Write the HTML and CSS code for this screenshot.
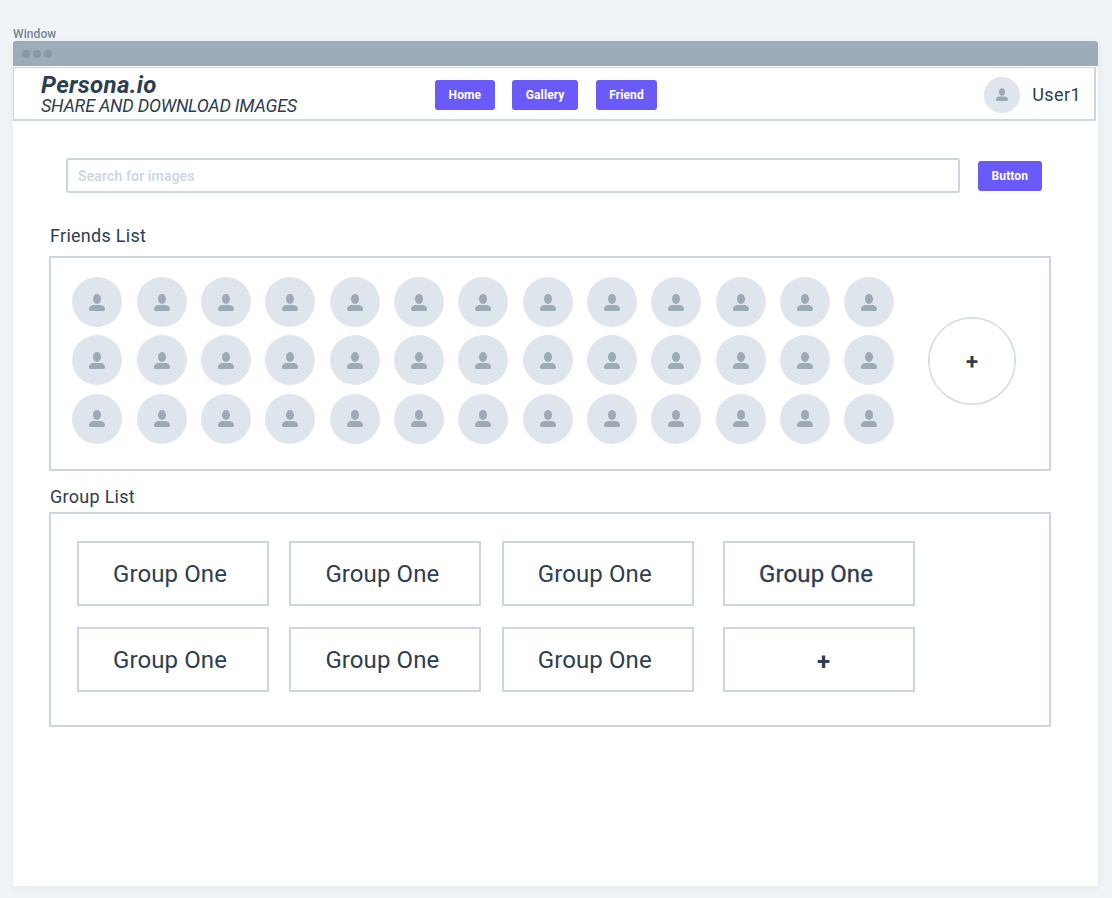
FILE: index.html
```html
<!DOCTYPE html>
<html lang="en">
	<head>
		<meta charset="utf-8" />
		<meta name="viewport" content="width=device-width, initial-scale=1" />
		<title>Persona.io</title>
		<link rel="stylesheet" href="styles.css">
	</head>
	<body>
		<svg class="sprites" width="0" height="0">
			<symbol id="person" viewBox="0 0 16 17">
				<ellipse cx="8" cy="5" rx="4" ry="5" />
				<path d="M0 15.2C0 12.6 2.6 11 4.5 11h7c1.900 0 4.500 1.600 4.500 4.200 0 1.200-.8 1.800-1.800 1.800H1.800C.8 17 0 16.400 0 15.200z" />
			</symbol>
		</svg>

		<div class="window-label">Window</div>
		<div class="window">
			<div class="titlebar">
				<span class="dot"></span><span class="dot"></span><span class="dot"></span>
			</div>

			<header class="topbar">
				<div class="brand">
					<h1>Persona.io</h1>
					<p>SHARE AND DOWNLOAD IMAGES</p>
				</div>
				<nav class="nav">
					<a class="btn" href="#">Home</a>
					<a class="btn" href="#">Gallery</a>
					<a class="btn" href="#">Friend</a>
				</nav>
				<div class="user">
					<span class="avatar small"><svg><use href="#person" /></svg></span>
					<span>User1</span>
				</div>
			</header>

			<div class="search">
				<input type="text" placeholder="Search for images" />
				<a class="btn" href="#">Button</a>
			</div>

			<h2>Friends List</h2>
			<section class="box friends">
				<div class="friend-grid">
					<span class="avatar"><svg><use href="#person" /></svg></span>
					<span class="avatar"><svg><use href="#person" /></svg></span>
					<span class="avatar"><svg><use href="#person" /></svg></span>
					<span class="avatar"><svg><use href="#person" /></svg></span>
					<span class="avatar"><svg><use href="#person" /></svg></span>
					<span class="avatar"><svg><use href="#person" /></svg></span>
					<span class="avatar"><svg><use href="#person" /></svg></span>
					<span class="avatar"><svg><use href="#person" /></svg></span>
					<span class="avatar"><svg><use href="#person" /></svg></span>
					<span class="avatar"><svg><use href="#person" /></svg></span>
					<span class="avatar"><svg><use href="#person" /></svg></span>
					<span class="avatar"><svg><use href="#person" /></svg></span>
					<span class="avatar"><svg><use href="#person" /></svg></span>

					<span class="avatar"><svg><use href="#person" /></svg></span>
					<span class="avatar"><svg><use href="#person" /></svg></span>
					<span class="avatar"><svg><use href="#person" /></svg></span>
					<span class="avatar"><svg><use href="#person" /></svg></span>
					<span class="avatar"><svg><use href="#person" /></svg></span>
					<span class="avatar"><svg><use href="#person" /></svg></span>
					<span class="avatar"><svg><use href="#person" /></svg></span>
					<span class="avatar"><svg><use href="#person" /></svg></span>
					<span class="avatar"><svg><use href="#person" /></svg></span>
					<span class="avatar"><svg><use href="#person" /></svg></span>
					<span class="avatar"><svg><use href="#person" /></svg></span>
					<span class="avatar"><svg><use href="#person" /></svg></span>
					<span class="avatar"><svg><use href="#person" /></svg></span>

					<span class="avatar"><svg><use href="#person" /></svg></span>
					<span class="avatar"><svg><use href="#person" /></svg></span>
					<span class="avatar"><svg><use href="#person" /></svg></span>
					<span class="avatar"><svg><use href="#person" /></svg></span>
					<span class="avatar"><svg><use href="#person" /></svg></span>
					<span class="avatar"><svg><use href="#person" /></svg></span>
					<span class="avatar"><svg><use href="#person" /></svg></span>
					<span class="avatar"><svg><use href="#person" /></svg></span>
					<span class="avatar"><svg><use href="#person" /></svg></span>
					<span class="avatar"><svg><use href="#person" /></svg></span>
					<span class="avatar"><svg><use href="#person" /></svg></span>
					<span class="avatar"><svg><use href="#person" /></svg></span>
					<span class="avatar"><svg><use href="#person" /></svg></span>
				</div>
				<a class="add-friend plus" href="#">+</a>
			</section>

			<h2 class="group-title">Group List</h2>
			<section class="box groups">
				<div class="group">Group One</div>
				<div class="group">Group One</div>
				<div class="group">Group One</div>
				<div class="group last strong">Group One</div>
				<div class="group">Group One</div>
				<div class="group">Group One</div>
				<div class="group">Group One</div>
				<a class="group last add-group plus" href="#">+</a>
			</section>
		</div>
	</body>
</html>
```

FILE: styles.css
```css
:root {
	--page: #f0f4f7;
	--line: #cbd6e2;
	--bar: #9cacb9;
	--dot: #8798a6;
	--ink: #2d3e50;
	--soft: #dfe5ed;
	--icon: #9aabb8;
	--accent: #6a5bf8;
}

* {
	box-sizing: border-box;
	margin: 0;
	padding: 0;
}

body {
	background: var(--page);
	color: var(--ink);
	font-family: Roboto, "Liberation Sans", sans-serif;
	padding: 28px 14px 12px 13px;
	min-height: 898px;
}

a {
	text-decoration: none;
	color: inherit;
}

.sprites {
	position: absolute;
}

.window-label {
	font-size: 12px;
	font-weight: 500;
	line-height: 13px;
	letter-spacing: 0.1px;
	color: #74879a;
}

.window {
	background: #fff;
	height: 845px;
	border-radius: 3px 3px 0 0;
	box-shadow: 0 2px 8px rgba(45, 62, 80, 0.06);
}

.titlebar {
	height: 25px;
	background: var(--bar);
	border-radius: 3px 3px 0 0;
	display: flex;
	align-items: center;
	gap: 3px;
	padding-left: 9px;
}

.dot {
	width: 8px;
	height: 8px;
	border-radius: 50%;
	background: var(--dot);
}

.topbar {
	display: flex;
	align-items: center;
	height: 54px;
	width: 1083px;
	margin-top: 1px;
	border: 2px solid var(--line);
	border-width: 1px 2px 2px 1px;
	padding: 2px 13px 0 27px;
}

.brand {
	width: 394px;
}

.brand h1 {
	font-size: 24px;
	line-height: 22px;
	font-weight: 700;
	font-style: italic;
	letter-spacing: 0.3px;
}

.brand p {
	font-size: 18px;
	line-height: 19px;
	font-style: italic;
	letter-spacing: -0.25px;
}

.nav {
	display: flex;
	gap: 17.5px;
}

.btn {
	display: block;
	background: var(--accent);
	color: #fff;
	font-size: 12px;
	font-weight: 700;
	line-height: 30px;
	letter-spacing: 0.1px;
	height: 30px;
	padding: 0 14px;
	border-radius: 3px;
}

.nav .btn {
	padding: 0 13.6px;
}

.user {
	margin-left: auto;
	display: flex;
	align-items: center;
	gap: 12px;
	font-size: 18px;
	letter-spacing: 0.4px;
}

.avatar {
	display: flex;
	align-items: center;
	justify-content: center;
	width: 50px;
	height: 50px;
	border-radius: 50%;
	background: var(--soft);
}

.avatar svg {
	width: 16px;
	height: 17px;
	fill: var(--icon);
}

.avatar.small {
	width: 36px;
	height: 36px;
}

.avatar.small svg {
	width: 12px;
	height: 13px;
}

.search {
	display: flex;
	align-items: center;
	gap: 18px;
	padding: 37px 0 0 53px;
	width: 1029px;
}

.search input {
	flex: 1;
	height: 35px;
	border: 2px solid var(--line);
	border-radius: 3px;
	padding: 0 10px;
	font: 14px Roboto, "Liberation Sans", sans-serif;
	letter-spacing: 0.15px;
	outline: none;
}

.search input::placeholder {
	color: #cbd6e2;
	font-weight: 500;
}

h2 {
	font-size: 18px;
	line-height: 22px;
	font-weight: 400;
	letter-spacing: 0.28px;
	margin: 32px 0 0 37px;
}

.group-title {
	margin-top: 15px;
}

.box {
	width: 1002px;
	height: 215px;
	margin: 9px 0 0 36px;
	border: 2px solid var(--line);
}

.friends {
	display: flex;
	align-items: flex-start;
	padding: 19px 0 0 21.3px;
}

.friend-grid {
	display: grid;
	grid-template-columns: repeat(13, 50px);
	column-gap: 14.33px;
	row-gap: 8.4px;
}

.plus {
	font-size: 22px;
	font-weight: 700;
}

.add-friend {
	display: flex;
	align-items: center;
	justify-content: center;
	width: 88px;
	height: 88px;
	margin: 40px 0 0 33.7px;
	border: 1px solid var(--line);
	border-radius: 50%;
	box-shadow: inset 0 0 0 0.5px var(--line);
}

.box.groups {
	margin-top: 4px;
}

.groups {
	display: flex;
	flex-wrap: wrap;
	align-content: flex-start;
	column-gap: 20.4px;
	row-gap: 21px;
	padding: 27px 0 0 26px;
}

.group {
	width: 192px;
	height: 65px;
	border: 2px solid var(--line);
	padding-left: 34px;
	font-size: 24px;
	line-height: 63px;
	letter-spacing: 0.1px;
}

.last {
	margin-left: 8.9px;
}

.strong {
	-webkit-text-stroke: 0.3px var(--ink);
}

.add-group {
	padding-left: 92px;
	line-height: 67px;
}
```
